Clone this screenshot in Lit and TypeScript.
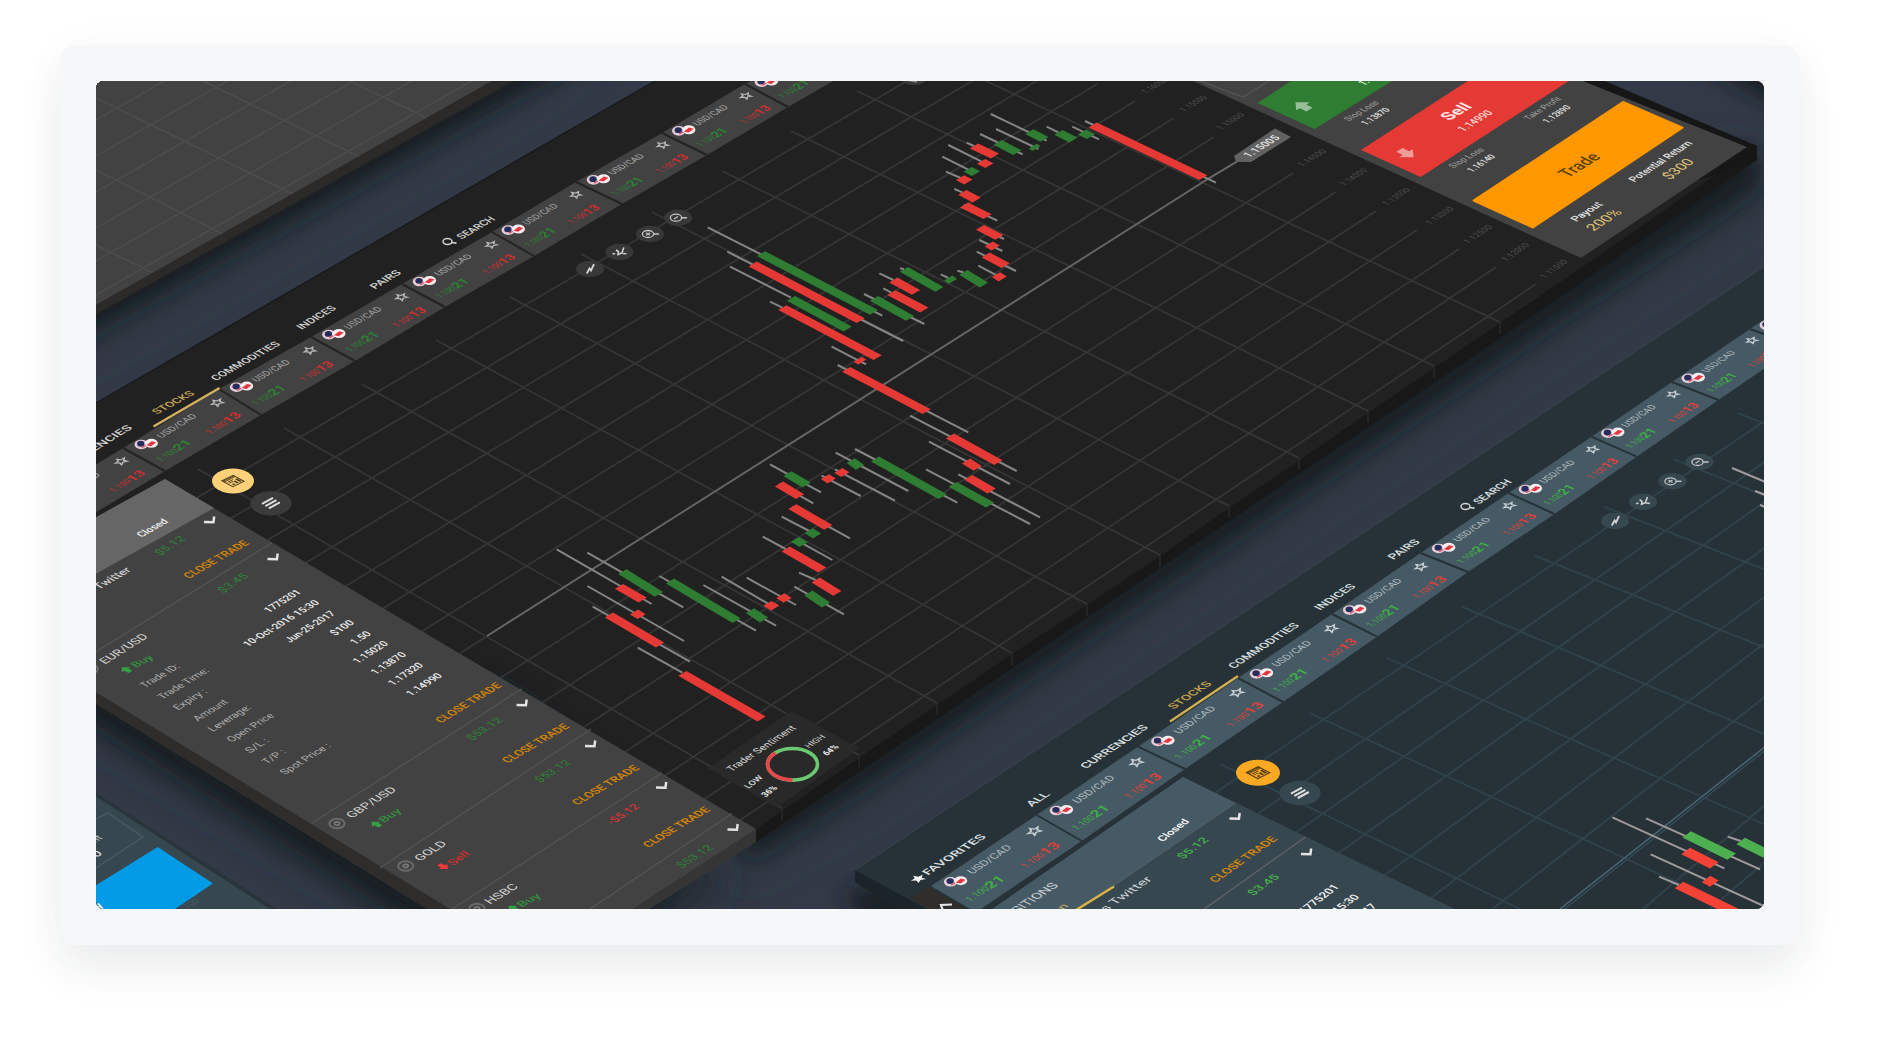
import { LitElement, html, svg, css } from "lit";
import { customElement } from "lit/decorators.js";

type Pt = [number, number];
type Theme = {
  strip: string; gap: string; name: string; up: string; down: string; star: string;
};

const pts = (list: Pt[]) => list.map((p) => p.join(",")).join(" ");

const DARK: Theme = { strip: "#424242", gap: "#232323", name: "#a8a8a8", up: "#2b8233", down: "#cf2e2e", star: "#b9b9b9" };
const TEAL: Theme = { strip: "#455a64", gap: "#263238", name: "#b3bcc0", up: "#3fae45", down: "#dc4038", star: "#c9d0d3" };

const V_LEFT: Pt = [0.86, 0.5];
const V_RIGHT: Pt = [0.9, 0.44];

/** Text whose baseline runs from (x1,y1) to (x2,y2); v is the direction the glyphs descend in. */
const label = (
  x1: number, y1: number, x2: number, y2: number, text: string,
  size: number, fill: string, weight = 400, v: Pt = V_LEFT,
) => {
  const len = Math.hypot(x2 - x1, y2 - y1);
  return svg`<text transform="matrix(${(x2 - x1) / len} ${(y2 - y1) / len} ${v[0]} ${v[1]} ${x1} ${y1})"
    font-size=${size} font-weight=${weight} fill=${fill}
    textLength=${len} lengthAdjust="spacingAndGlyphs">${text}</text>`;
};

const line = (a: Pt, b: Pt, stroke: string, width = 1.4) =>
  svg`<line x1=${a[0]} y1=${a[1]} x2=${b[0]} y2=${b[1]} stroke=${stroke} stroke-width=${width} />`;

const poly = (p: Pt[], fill: string) => svg`<polygon points=${pts(p)} fill=${fill} />`;

const flags = (x: number, y: number) => svg`
  <ellipse cx=${x - 5.5} cy=${y + 0.7} rx="6.8" ry="4.8" fill="#e6cdd5" />
  <ellipse cx=${x - 6} cy=${y} rx="3.7" ry="2.9" fill="#262c5e" />
  <path d="M${x - 5} ${y + 4}l6 -3.4M${x - 1.6} ${y + 0.6}l2.4 -1.6" stroke="#dd5568" stroke-width="1.3" />
  <ellipse cx=${x + 4.6} cy=${y - 0.4} rx="6.5" ry="4.5" fill="#f6eeee" />
  <path d="M${x - 0.4} ${y + 1.4}l5.2 -4l4.6 1.2l-5 3.8z" fill="#e5343f" />`;

const STAR = "M0 -5L1.5 -1.6L5 -1.4L2.3 1L3.2 4.6L0 2.6L-3.2 4.6L-2.3 1L-5 -1.4L-1.5 -1.6Z";

/** One quote tile, drawn in a 100 by 50 local space spanned by the strip's own edges. */
const quote = (t0: Pt, t1: Pt, b0: Pt, th: Theme) => {
  const u: Pt = [t1[0] - t0[0], t1[1] - t0[1]];
  const v: Pt = [b0[0] - t0[0], b0[1] - t0[1]];
  const m = `matrix(${u[0] / 100} ${u[1] / 100} ${v[0] / 50} ${v[1] / 50} ${t0[0]} ${t0[1]})`;
  const fx = t0[0] + u[0] * 0.161 + v[0] * 0.21;
  const fy = t0[1] + u[1] * 0.161 + v[1] * 0.21;
  return svg`
    ${flags(fx - 0.5, fy + 0.4)}
    <g transform=${m}>
      <text x="27.5" y="14.5" font-size="9.8" fill=${th.name} textLength="37.5" lengthAdjust="spacingAndGlyphs">USD/CAD</text>
      <text x="6" y="38" font-size="9.5" fill=${th.up} textLength="18.5" lengthAdjust="spacingAndGlyphs">1.100</text>
      <text x="24.5" y="38.5" font-size="12.5" font-weight="700" fill=${th.up} textLength="14.5" lengthAdjust="spacingAndGlyphs">21</text>
      <text x="55" y="41" font-size="9.5" fill=${th.down} textLength="18.5" lengthAdjust="spacingAndGlyphs">1.100</text>
      <text x="73.5" y="41.5" font-size="12.5" font-weight="700" fill=${th.down} textLength="14.5" lengthAdjust="spacingAndGlyphs">13</text>
      <path transform="translate(87 12.5) scale(0.92)" d=${STAR} fill="none" stroke=${th.star} stroke-width="1.5" />
    </g>`;
};

const strip = (top: Pt[], bottom: Pt[], th: Theme) => svg`
  ${poly([...top, ...[...bottom].reverse()], th.strip)}
  ${top.slice(0, -1).map((t, i) => quote(t, top[i + 1], bottom[i], th))}
  ${top.map((t, i) => line(t, bottom[i], th.gap, 2))}`;

type Candle = [string, number, number, number, number, number, number, number, number];

/** Candle: side, then body start, body end, wick start and wick end in thirds of a pixel from origin o. */
const candle = (c: Candle, o: Pt, colors: Record<string, string>, wick: string, w: Pt) => {
  const n = c.slice(1) as number[];
  const p: Pt[] = [0, 2, 4, 6].map((i) => [n[i] / 3 + o[0], n[i + 1] / 3 + o[1]]);
  const [a, b, s, e] = p;
  return svg`
    ${line(s, e, wick, 2)}
    ${poly([[a[0] - w[0], a[1] - w[1]], [a[0] + w[0], a[1] + w[1]], [b[0] + w[0], b[1] + w[1]], [b[0] - w[0], b[1] - w[1]]], colors[c[0]])}`;
};

const SET_A: Candle[] = [
  ["g", 843, 536, 1182, 712, 683, 457, 1207, 722],
  ["r", 818, 567, 1142, 737, 742, 530, 1270, 798],
  ["g", 933, 670, 1103, 762, 750, 575, 933, 668],
  ["r", 907, 698, 1193, 848, 870, 680, 907, 698],
  ["r", 1133, 853, 1147, 861, 1055, 815, 1158, 868],
];
const SET_B: Candle[] = [
  ["r", 78, 388, 320, 515, 53, 375, 445, 577],
  ["r", 390, 588, 535, 668, 270, 527, 590, 693],
  ["r", 438, 663, 473, 685, 327, 605, 570, 732],
  ["r", 445, 712, 515, 753, 415, 703, 660, 832],
  ["g", 398, 733, 510, 795, 318, 688, 630, 852],
  ["g", 165, 657, 368, 770, 105, 627, 412, 788],
  ["g", 92, 662, 120, 682, 47, 638, 265, 753],
  ["r", 55, 691, 76, 704, 45, 688, 225, 782],
  ["r", 15, 710, 35, 723, 5, 707, 122, 768],
  ["g", 252, 88, 358, 148, 240, 85, 252, 88],
  ["r", 220, 120, 288, 157, 178, 100, 220, 120],
  ["r", 214, 158, 313, 210, 190, 145, 214, 158],
  ["g", 162, 175, 270, 235, 132, 162, 313, 252],
  ["g", 385, 114, 399, 124, 362, 103, 385, 114],
  ["g", 430, 97, 492, 135, 412, 92, 430, 97],
  ["r", 528, 104, 548, 117, 475, 77, 530, 106],
  ["r", 497, 45, 557, 77, 470, 35, 588, 93],
  ["r", 506, 12, 527, 24, 478, 0, 547, 33],
];
const SET_C: Candle[] = [
  ["r", 240, 457, 298, 487, 240, 457, 312, 492],
  ["r", 192, 390, 263, 425, 192, 390, 292, 437],
  ["r", 187, 352, 230, 375, 163, 342, 187, 352],
  ["r", 180, 308, 205, 321, 138, 290, 182, 309],
  ["g", 203, 283, 228, 296, 127, 245, 205, 284],
  ["r", 243, 259, 268, 272, 145, 210, 245, 260],
  ["r", 222, 213, 285, 243, 200, 203, 222, 213],
  ["g", 293, 202, 352, 233, 240, 177, 368, 238],
  ["g", 388, 170, 433, 193, 272, 117, 440, 197],
  ["g", 399, 213, 409, 221, 288, 162, 415, 222],
  ["g", 475, 172, 520, 195, 440, 155, 475, 172],
  ["g", 546, 171, 573, 185, 517, 155, 597, 193],
  ["r", 578, 150, 910, 308, 555, 138, 948, 323],
];
const SET_D: Candle[] = [
  ["g", 922, 341, 980, 375, 870, 313, 1023, 397],
  ["r", 897, 372, 960, 410, 897, 372, 1000, 430],
  ["r", 937, 440, 1045, 502, 937, 440, 1110, 535],
  ["g", 986, 512, 1011, 528, 905, 470, 988, 513],
  ["g", 945, 538, 971, 554, 947, 539, 1057, 600],
  ["r", 917, 567, 1027, 630, 848, 530, 917, 567],
  ["r", 1007, 660, 1072, 700, 957, 638, 1007, 660],
  ["g", 985, 699, 1038, 735, 943, 680, 1092, 763],
  ["r", 901, 707, 923, 721, 800, 653, 948, 735],
  ["r", 862, 730, 886, 744, 725, 650, 864, 731],
  ["g", 810, 752, 852, 780, 670, 675, 888, 797],
  ["g", 570, 663, 770, 782, 538, 648, 828, 812],
  ["g", 427, 635, 537, 703, 322, 578, 610, 742],
  ["r", 417, 679, 488, 720, 230, 568, 515, 732],
  ["r", 462, 756, 485, 770, 322, 678, 612, 843],
  ["r", 387, 765, 540, 855, 338, 740, 630, 905],
  ["r", 607, 940, 845, 1077, 473, 863, 607, 938],
];
const SET_E: Candle[] = [
  ["g", 1220, 583, 1355, 650, 1098, 535, 1440, 688],
  ["r", 1217, 633, 1303, 676, 997, 532, 1333, 685],
  ["r", 1278, 717, 1303, 731, 1112, 643, 1460, 802],
  ["r", 1197, 735, 1420, 844, 1137, 710, 1197, 735],
  ["g", 1382, 603, 1500, 662, 1343, 590, 1382, 603],
];

const GRID_DOWN: [Pt, Pt][] = [
  [[198, 469], [782, 808]], [[284, 428], [859, 755]], [[361.7, 384], [937, 703]],
  [[436, 340], [1012, 653]], [[510, 297], [1087, 604]], [[581, 254], [1160, 555]],
  [[652, 212], [1229, 506]], [[722, 171], [1299, 458]], [[791, 131], [1368, 411]],
  [[857, 91], [1434, 366]], [[922, 51], [1500, 322]],
];
const GRID_UP: [Pt, Pt][] = [
  [[222, 483], [987, 34]], [[257, 503], [1023, 51]], [[293, 525], [1060, 67]],
  [[332, 547], [1097, 84]], [[372, 570], [1135, 101]], [[408, 593], [1174, 118]],
  [[448, 615], [1214, 137]], [[487, 636], [1254, 150]], [[527, 661], [1293, 173]],
  [[568, 686], [1335.7, 192]], [[610, 710], [1376, 211]], [[652, 734], [1417, 230]],
  [[693, 757], [1459, 249]], [[733, 780], [1496, 267]], [[770, 800], [1536, 284]],
];
const extend = ([a, b]: [Pt, Pt], t: number): [Pt, Pt] =>
  [[a[0] - (b[0] - a[0]) * t, a[1] - (b[1] - a[1]) * t], b];

const TOP_A: Pt[] = [[26, 507], [123, 448], [219, 389], [311, 337], [402, 284], [492, 232], [576, 182], [662, 133], [745, 84], [829, 36]];
const BOT_A: Pt[] = [[68, 529], [165, 471], [261, 415], [355, 361], [445, 307], [534, 256], [622, 204], [707, 155], [788, 107], [870, 60]];
const TOP_B: Pt[] = [[930, 886.7], [1036.7, 815], [1138, 746.7], [1238, 678], [1332, 614], [1420.6, 553], [1508.5, 493], [1591.4, 436.7], [1672, 382], [1750, 329], [1828, 276]];
const BOT_B: Pt[] = [[975, 913], [1081.7, 841], [1185, 769], [1283, 702], [1377, 636.7], [1468, 572], [1554.5, 514], [1636.7, 456.7], [1718.5, 400], [1797, 346], [1872, 294]];

const NAV_A: [number, number, number, number, string][] = [
  [66, 469, 133, 428, "CURRENCIES"], [216, 381, 281, 344.5, "COMMODITIES"],
  [301.7, 330, 337, 308.5, "INDICES"], [375, 289.5, 402, 273, "PAIRS"], [461.7, 239.5, 496, 219.5, "SEARCH"],
];
const NAV_B: [number, number, number, number, string][] = [
  [928, 875.5, 986.7, 837, "FAVORITES"], [1031.7, 807, 1050.7, 794.5, "ALL"],
  [1086, 769, 1149, 727.5, "CURRENCIES"], [1234, 669, 1300, 625.5, "COMMODITIES"],
  [1320, 610.5, 1356.5, 586.5, "INDICES"], [1393.6, 560, 1420.6, 542, "PAIRS"], [1479, 504.5, 1512.4, 482, "SEARCH"],
];

const DETAILS: [number, number, number, number, string][] = [
  [145, 688, 180.7, 667, "Trade ID:"], [162.7, 699.5, 210, 671, "Trade Time:"],
  [178, 710.5, 208, 692, "Expiry :"], [198, 721.5, 229, 702.5, "Amount"],
  [213, 732, 252, 708, "Leverage:"], [231.7, 742.5, 275, 716, "Open Price"],
  [250, 753.5, 270, 741, "S/L :"], [267, 764.5, 286.7, 752.5, "T/P :"], [285, 775, 331.7, 746.5, "Spot Price :"],
];
const VALUES: [number, number, number, number, string][] = [
  [269, 613, 302, 592.5, "1775201"], [248, 647, 320, 603, "10-Oct-2016 15:30"],
  [290, 643, 336, 614, "Jun-25-2017"], [335, 636, 355, 623, "$100"],
  [355, 645, 372, 634, "1.50"], [357.7, 664, 389, 644, "1.15020"],
  [375.7, 675, 407, 655, "1.13870"], [393, 686, 424, 665.5, "1.17320"], [411, 696.5, 443, 676, "1.14990"],
];
const CLOSES: [number, number, number, number][] = [
  [189, 579, 250, 543.5], [441, 723.5, 502.5, 686], [507.5, 763.5, 570, 727],
  [577.5, 805.5, 640, 768.5], [648.5, 848, 711, 810],
];
const PRICES: [number, number, number, number, string][] = [
  [1146, 94, 1169, 80, "1.16000"], [1184, 112, 1208, 97.7, "1.15500"], [1220.7, 130, 1245, 115, "1.15000"],
  [1302, 166.7, 1327, 151.7, "1.14500"], [1344, 186, 1368, 170.7, "1.14000"], [1387, 205.7, 1411, 190, "1.13500"],
  [1430, 225, 1454.6, 209, "1.13000"], [1468, 244, 1493, 227, "1.12500"], [1506, 261.7, 1530, 245, "1.12000"],
  [1545, 279, 1568, 261.7, "1.11500"],
];

const GRID2_DOWN: [Pt, Pt][] = [
  [[1220, 764], [1520, 909]], [[1309, 712.7], [1735, 909]], [[1387, 658], [1766, 825]],
  [[1461.6, 606.7], [1766, 735]], [[1534.6, 555.7], [1766, 648]], [[1604, 506.7], [1766, 570]],
  [[1673, 459], [1766, 496]], [[1737, 413], [1766, 424]],
];
const GRID2_UP: [Pt, Pt][] = [
  [[1215, 793], [1766, 420]], [[1230, 833], [1766, 461]], [[1250, 865], [1766, 501]],
  [[1280, 895], [1766, 547]], [[1330, 915], [1766, 596]], [[1410, 914], [1766, 642]],
  [[1490, 911], [1766, 696]], [[1643, 909], [1766, 804]], [[1710, 909], [1766, 861]],
];

const chevron = (x: number, y: number) =>
  svg`<polyline points=${pts([[x - 6, y + 1.6], [x + 3.4, y + 1.8], [x + 4.2, y - 4]])} fill="none" stroke="#e4e4e4" stroke-width="2.5" />`;

const eye = (x: number, y: number) => svg`
  <ellipse cx=${x} cy=${y} rx="7.6" ry="4.8" fill="none" stroke="#6a6a6a" stroke-width="2" />
  <ellipse cx=${x} cy=${y} rx="2.6" ry="1.6" fill="none" stroke="#777777" stroke-width="1.6" />`;

/** Thick arrow along the plane's vertical axis; dir 1 points up the plane, -1 points down it. */
const arrow = (x: number, y: number, s: number, dir: number, fill: string, opacity = 1) =>
  svg`<path transform="matrix(${0.86 * s} ${-0.5 * s} ${0.88 * s * dir} ${0.46 * s * dir} ${x} ${y})"
    d="M0 -5L5 0.4H2.3V5H-2.3V0.4H-5Z" fill=${fill} fill-opacity=${opacity} />`;

const search = (x: number, y: number, c = "#d2d2d2") => svg`
  <ellipse cx=${x - 1.5} cy=${y} rx="4.5" ry="2.9" fill="none" stroke=${c} stroke-width="1.5" />
  <line x1=${x + 2.5} y1=${y + 1} x2=${x + 7.5} y2=${y + 1.6} stroke=${c} stroke-width="1.6" />`;

const tool = (x: number, y: number, kind: number, bg: string) => svg`
  <ellipse cx=${x} cy=${y} rx="14" ry="8.2" fill=${bg} />
  ${kind === 0
    ? svg`<polyline points=${pts([[x - 3.2, y + 4.5], [x - 0.4, y - 0.6], [x + 1, y + 1.4], [x + 4, y - 4.8]])} fill="none" stroke="#d8d8d8" stroke-width="1.8" />`
    : kind === 1
      ? svg`<polyline points=${pts([[x - 3.5, y - 2], [x - 1, y - 0.4], [x - 1.5, y + 2.6], [x + 2.4, y + 1], [x + 4.4, y - 4.6]])} fill="none" stroke="#d8d8d8" stroke-width="1.5" />
          <path d="M${x - 7} ${y + 2}l2.6 -.6M${x + 3} ${y + 1.4}l4 .4" stroke="#c9c9c9" stroke-width="1.5" />`
      : svg`<ellipse cx=${x - 2} cy=${y} rx="5.6" ry="3.5" fill="none" stroke="#c4c4c4" stroke-width="1.3" />
          <line x1=${x + 3.6} y1=${y} x2=${x + 9} y2=${y} stroke="#c4c4c4" stroke-width="1.5" />
          <path d=${kind === 2 ? `M${x - 4} ${y + 1.2}l4 -2.4M${x - 4} ${y - 1.2}l4 2.4` : `M${x - 4} ${y + 1.2}l4 -2.4`} stroke="#c4c4c4" stroke-width="1.2" />`}`;

const newsButton = (x: number, y: number, fill: string, s = 1) => svg`
  <ellipse cx=${x} cy=${y} rx=${21 * s} ry=${12.4 * s} fill=${fill} />
  <g transform="matrix(${0.8 * s} ${-0.4 * s} ${0.78 * s} ${0.42 * s} ${x} ${y})" fill="none" stroke="#4c3c18">
    <rect x="-7" y="-7" width="14" height="14" stroke-width="1.4" />
    <path d="M-7 -4.2H7M-7 -5.8H7" stroke-width="1.2" />
    <path d="M-5 -1.8H2M-5 0.4H0" stroke-width="1.1" />
    <path d="M-3.4 5.5V3M0.8 5.5V0.8M4.6 5.5V-1" stroke-width="2.3" />
  </g>`;

const menuButton = (x: number, y: number, fill: string) => svg`
  <ellipse cx=${x} cy=${y} rx="20.6" ry="12.2" fill=${fill} />
  <path d=${[-1, 0, 1].map((i) => `M${x - 5.6 + i * 3.4} ${y + 2.8 + i * 2.2}l11 -6`).join("")} stroke="#dedede" stroke-width="2" />`;

@customElement("app-root")
export class AppRoot extends LitElement {
  static styles = css`
    :host {
      display: block;
      width: 100%;
      height: 1050px;
      background: #ffffff;
      overflow: hidden;
      font-family: Roboto, "Liberation Sans", sans-serif;
    }
    .page {
      display: flex;
      box-sizing: border-box;
      height: 1050px;
      padding: 45px 91px 105px 60px;
    }
    .frame {
      flex: 1;
      display: flex;
      box-sizing: border-box;
      padding: 36px;
      border-radius: 16px;
      background: #f5f7f9;
      box-shadow: 0 26px 44px rgba(35, 40, 60, 0.07), 0 4px 50px rgba(35, 40, 60, 0.03);
    }
    .scene {
      flex: 1;
      display: block;
      min-width: 0;
      border-radius: 8px;
      overflow: hidden;
      background: #333a47;
    }
    text { font-family: Roboto, "Liberation Sans", sans-serif; }
  `;

  private backPanel() {
    const up: number[] = [120, 156, 192, 228, 261, 295];
    const down: [Pt, Pt][] = [
      [[96, 98], [293, 194]], [[96, 170], [223, 234]], [[96, 245], [153, 273]],
      [[203, 81], [360, 157]], [[337, 75], [427, 118]],
    ];
    return svg`
      <polygon points="60,372 96,352 530,100 600,50 60,50" fill="#2a353d" filter="url(#wide)" />
      <polygon points="60,348 96,328 520,92 600,50 60,50" fill="#171d21" filter="url(#soft)" />
      ${poly([[90, 318], [96, 314], [513, 81], [60, 60]], "#2c2a29")}
      ${poly([[90, 308.5], [96, 305], [492, 81], [60, 60]], "#424242")}
      ${up.map((y) => line([96, y], [96 + (y - 60) / 0.57, 60], "#4c4c4c", 1.7))}
      ${down.map(([a, b]) => line(a, b, "#4c4c4c", 1.7))}
      ${poly([[96, 305], [96, 314], [513, 81], [492, 81]], "#2c2a29")}`;
  }

  private cornerPanel() {
    return svg`
      ${poly([[90, 789], [96, 792.5], [277, 909], [90, 915]], "#2a353b")}
      ${poly([[90, 793], [96, 796.5], [270, 909], [90, 915]], "#37474f")}
      <polygon points="90,822 108,813 143,837 90,872" fill="none" stroke="#465b66" stroke-width="1.3" />
      ${label(72, 858, 103, 838, "Amount", 10, "#c5cacd")}
      ${label(84, 866, 103, 853.5, "100", 11, "#d8dcde", 500)}
      ${poly([[90, 889], [157.7, 847], [213, 883.5], [172, 911], [90, 915]], "#039be5")}
      ${label(88, 916, 104, 906, "Buy", 12, "#ffffff", 500)}
      ${label(187, 909, 200, 901, "100", 9, "#465b66")}`;
  }

  private chart() {
    const col = { g: "#2e7d32", r: "#e53935" };
    const w: Pt = [4.1, -2.4];
    const edge: Pt[] = [[756, 829], [782, 811], [859, 758], [937, 705], [1012, 654], [1087, 605], [1160, 556], [1229, 508], [1300, 460], [1368, 413], [1434, 368], [1500, 323], [1581, 268], [1757, 146]];
    return svg`
      <polygon points="740,880 860,812 1300,516 1600,315 1770,205 1755,150 1600,180 700,700" fill="#2a353d" filter="url(#wide)" />
      <polygon points="750,858 860,788 1300,492 1600,290 1762,182 1752,150 1600,170 700,700" fill="#161c20" filter="url(#soft)" />
      <polygon points="1700,60 1764,98 1800,110 1800,40 1700,40" fill="#161c20" filter="url(#soft)" />
      ${poly([[620, 600], ...edge, [1757, 160], [1590, 276], [1500, 338], [1229, 521], [859, 772], [756, 842]], "#181818")}
      ${poly([[90, 406.5], [96, 403], [655, 81], [700, 55], [1550, 62], [1757, 146], ...[...edge].reverse(), [90, 560]], "#212121")}
      ${line([96, 403], [655, 81], "#17191b", 1.4)}
      ${GRID_DOWN.map(([a, b]) => svg`${line(a, b, "#363636", 1.7)}${line(b, [b[0], b[1] + 12], "#282828", 1.5)}`)}
      ${GRID_UP.map((g) => { const [a, b] = extend(g, 0.06); return line(a, b, "#363636", 1.7); })}
      ${line([487, 636], [1207, 179.5], "#666666", 1.8)}
      ${line([1207, 179.5], [1238, 161], "#6c6c6c", 1.8)}
      ${SET_A.map((c) => candle(c, [480, 75], col, "#868686", w))}
      ${SET_B.map((c) => candle(c, [820, 240], col, "#868686", w))}
      ${SET_C.map((c) => candle(c, [900, 75], col, "#868686", w))}
      ${SET_D.map((c) => candle(c, [480, 360], col, "#868686", w))}
      ${PRICES.map(([a, b, c, d, s]) => label(a, b, c, d, s, 9, "#4e4e4e", 400, V_RIGHT))}
      ${poly([[1234, 156], [1275, 128.5], [1291, 137], [1251, 162], [1236, 162]], "#616161")}
      ${label(1249, 158, 1280.5, 138, "1.15005", 11, "#e6e6e6", 500, V_RIGHT)}
      <ellipse cx="914" cy="78" rx="13" ry="7" fill="#3b3b3b" />
      <path d="M907 80l10 2" stroke="#8d8d8d" stroke-width="1.4" />
      ${strip(TOP_A, BOT_A, DARK)}
      ${NAV_A.map(([a, b, c, d, s]) => label(a, b, c, d, s, 10.5, "#d4d4d4", 500))}
      ${search(449, 241.5)}
      ${label(157, 414.5, 195.5, 394, "STOCKS", 10.5, "#c9a65a", 500)}
      ${line([153.5, 426.5], [219.5, 388], "#d6b15f", 2.4)}
      ${newsButton(233, 481, "#fdd17a")}
      ${menuButton(271, 503.3, "#3b3b3b")}
      ${tool(590, 269, 0, "#383838")}${tool(619.5, 252, 1, "#383838")}
      ${tool(650, 234, 2, "#383838")}${tool(678, 217.7, 3, "#383838")}`;
  }

  private sentiment() {
    return svg`
      <polygon points="791.7,710.7 859,748.3 776.7,807.7 708,768.3" fill="#2a2a2a" fill-opacity="0.93" />
      ${label(731.7, 772, 796.7, 728.5, "Trader Sentiment", 10.5, "#d6d6d6")}
      <ellipse cx="792.5" cy="764.3" rx="25" ry="15.8" fill="none" stroke="#6cc871" stroke-width="3.6" />
      <path d="M775.5 752.8A25 15.8 0 0 0 792.5 780.1" fill="none" stroke="#e5484b" stroke-width="3.8" />
      ${label(748.5, 789, 763.5, 777.5, "LOW", 8.5, "#dddddd", 500)}
      ${label(765.7, 797.5, 778, 788, "36%", 9, "#eeeeee", 700)}
      ${label(809, 748.5, 826, 737, "HIGH", 8.5, "#dddddd")}
      ${label(827, 756, 839.5, 747, "64%", 9, "#eeeeee", 700)}`;
  }

  private positions() {
    const up = "#2b8233";
    const dividers: [Pt, Pt][] = [
      [[90, 655.5], [272, 542.7]], [[312, 823], [521.7, 689]], [[380, 868], [591, 729]],
      [[452, 909], [662, 773]], [[590, 909], [732, 813.5]],
    ];
    return svg`
      <polygon points="60,712 96,734 420,935 660,930 730,880 500,700 60,600" fill="#222b32" filter="url(#wide)" />
      <polygon points="60,698 96,720 430,930 620,930 670,895 500,700 60,600" fill="#161c20" filter="url(#soft)" />
      ${poly([[90, 689], [96, 704], [436, 915], [450, 915], [450, 905], [96, 690]], "#2f2d2c")}
      ${poly([[756, 829], [756, 842], [640, 915], [610, 915]], "#353535")}
      ${poly([[90, 520.5], [165, 479], [756, 829], [628, 912], [455, 912], [90, 688.5]], "#424242")}
      ${poly([[90, 520.5], [165, 479], [214, 508], [90, 577]], "#666666")}
      ${dividers.map(([a, b]) => line(a, b, "#545454", 1.3))}
      ${label(141.7, 537.5, 169, 522, "Closed", 10.5, "#f0f0f0", 500)}
      ${label(86, 597.5, 132, 570.5, "vs Twitter", 11.5, "#cfcfcf", 500)}
      ${label(160, 556, 186, 539, "$5.12", 11, up)}
      ${label(223, 593.5, 249, 576.5, "$3.45", 11, up)}
      ${CLOSES.map(([a, b, c, d]) => label(a, b, c, d, "CLOSE TRADE", 11.5, "#d98706", 500))}
      ${label(105, 664.5, 149, 637, "EUR/USD", 11.5, "#d2d2d2")}
      <ellipse cx="90" cy="669" rx="7.8" ry="5" fill="none" stroke="#6f6f6f" stroke-width="1.8" />
      ${arrow(126, 669.5, 1, 1, "#36a043")}
      ${label(136, 668, 154.5, 658, "Buy", 11, "#338e3d", 500)}
      ${DETAILS.map(([a, b, c, d, s]) => label(a, b, c, d, s, 10.5, "#aeaeae"))}
      ${VALUES.map(([a, b, c, d, s]) => label(a, b, c, d, s, 10.5, "#ededed", 500))}
      ${label(471.7, 741, 503.5, 720.5, "$53.12", 11, up)}
      ${label(540, 783, 571.7, 763, "$53.12", 11, up)}
      ${label(612, 825, 640, 807, "-$5.12", 11, "#d63232", 500)}
      ${label(681.7, 868.5, 714, 848, "$53.12", 11, up)}
      ${eye(337, 823.5)}${label(351.7, 818.5, 397.2, 790, "GBP/USD", 11.5, "#d2d2d2")}
      ${arrow(376, 824, 1, 1, "#36a043")}${label(384, 823, 402.5, 811.5, "Buy", 11, "#338e3d", 500)}
      ${eye(405.7, 866)}${label(420, 861.5, 447.7, 844, "GOLD", 11.5, "#d2d2d2")}
      ${arrow(443.5, 866.7, 1, -1, "#ef3a38")}${label(453, 866, 470.5, 854, "Sell", 11, "#c62f2f", 500)}
      ${eye(477, 908.5)}${label(490, 904.5, 519, 887, "HSBC", 11.5, "#d2d2d2")}
      ${arrow(513, 908, 1, 1, "#36a043")}${label(522, 907.5, 542, 896.5, "Buy", 11, "#338e3d", 500)}
      ${([[210, 520.5], [273.5, 557.5], [522.5, 703.5], [591, 744.5], [662, 786], [733.5, 828]] as Pt[]).map(([x, y]) => chevron(x, y))}`;
  }

  private order() {
    const v = V_RIGHT;
    return svg`
      ${poly([[1570, 66], [1598, 78], [1757, 146], [1757, 160], [1700, 180], [1560, 70]], "#161616")}
      ${poly([[1193, 81], [1150, 60], [1540, 60], [1583, 81], [1747, 147], [1581, 258]], "#424242")}
      <polyline points="1200,81 1243,97 1272,79" fill="none" stroke="#555555" stroke-width="1.2" />
      ${poly([[1257.5, 103], [1300, 75], [1402, 75], [1314.6, 129]], "#2e7d32")}
      ${poly([[1361, 150], [1477, 75], [1578, 75], [1420.7, 177]], "#e53935")}
      <polygon points="1473.5,200.7 1623,102 1682.5,127.7 1533,227.5" fill="#ff9800" stroke="#ff9800" stroke-width="2" stroke-linejoin="round" />
      ${arrow(1302.5, 106, 1.6, 1, "#ffffff", 0.5)}
      ${arrow(1406.5, 153.5, 1.6, -1, "#ffffff", 0.5)}
      ${label(1364, 86, 1392, 68, "1.13870", 11, "#e8f0e8", 500, v)}
      ${label(1349, 121.5, 1379.6, 103, "Stop Loss", 9.5, "#a2a2a2", 400, v)}
      ${label(1366, 125.5, 1390.5, 110, "1.13870", 9.5, "#e2e2e2", 500, v)}
      ${label(1449, 121, 1473, 107, "Sell", 16.5, "#ffe3e2", 700, v)}
      ${label(1463.6, 132, 1493.5, 113, "1.14990", 11.5, "#ffd9d8", 500, v)}
      ${label(1529, 120.5, 1562, 99, "Take Profit", 9.5, "#a2a2a2", 400, v)}
      ${label(1547.5, 123.5, 1571.5, 107.5, "1.12890", 9.5, "#e2e2e2", 500, v)}
      ${label(1453.6, 168.5, 1485, 150, "Stop Loss", 9.5, "#a2a2a2", 400, v)}
      ${label(1472, 172.5, 1496, 156.7, "1.16140", 9.5, "#e2e2e2", 500, v)}
      ${label(1568, 178, 1601.5, 157.5, "Trade", 18, "#5a430f", 500, v)}
      ${label(1634.5, 182.5, 1693, 143.5, "Potential Return", 11, "#e4e4e4", 500, v)}
      ${label(1669.5, 180, 1695, 162, "$300", 14, "#e3c576", 400, v)}
      ${label(1576.5, 222, 1603.5, 204.5, "Payout", 11, "#e4e4e4", 500, v)}
      ${label(1593.5, 231.5, 1623, 212.5, "200%", 14, "#e3c576", 400, v)}`;
  }

  private tealPanel() {
    const v = V_RIGHT;
    const col = { g: "#4caf50", r: "#f44336" };
    const up = "#43b049";
    return svg`
      <polygon points="850,888 846,896 870,925 930,925 930,890" fill="#161c20" filter="url(#soft)" />
      ${poly([[855, 870], [855, 882], [906, 915], [940, 915]], "#1b2429")}
      ${poly([[855, 870], [1203, 640], [1608, 370], [1768, 264], [1768, 915], [932, 912]], "#263238")}
      <polyline points="855,870 1203,640 1608,370 1768,264" fill="none" stroke="#36434b" stroke-width="1" />
      ${GRID2_DOWN.map(([a, b]) => line(a, b, "#30424b", 1.8))}
      ${GRID2_UP.map(([a, b]) => line(a, b, "#30424b", 1.8))}
      ${line([1560, 909], [1766, 746], "#4a6775", 1.5)}
      ${line([1562, 911], [1768, 748], "#35505c", 1.2)}
      ${SET_E.map((c) => candle(c, [1280, 640], col, "#a09a9b", [4.3, -3.2]))}
      ${line([1732, 468], [1768, 483], "#a09a9b", 2.2)}
      ${line([1755, 491], [1768, 496], "#a09a9b", 2.2)}
      ${line([1760, 505], [1768, 508], "#a09a9b", 2.2)}
      ${poly([[910, 898], [930, 886.7], [972, 911], [932, 912]], "#302d2b")}
      <polyline points="952,904.5 941,905 943,911" fill="none" stroke="#e8e8e8" stroke-width="2.2" />
      ${strip(TOP_B, BOT_B, TEAL)}
      ${poly([[1183, 777], [1456, 909.5], [1205, 915], [1080, 915], [985, 914]], "#37474f")}
      ${poly([[1183, 777], [1235.5, 803], [1072, 914], [985, 914]], "#465a65")}
      ${line([1235.5, 803], [1075, 912], "#55616a", 1)}
      ${line([1305.5, 837], [1200, 912], "#626466", 1.3)}
      ${label(1003, 923, 1059, 885.5, "POSITIONS", 12, "#cdd3d6", 400, v)}
      ${label(1044, 923, 1069, 906, "Open", 10, "#d6b15f", 400, v)}
      ${line([1068, 915], [1114, 886.5], "#d9b343", 2.4)}
      ${label(1162.7, 842, 1190, 821.5, "Closed", 10.5, "#ffffff", 500, v)}
      ${label(1100, 916, 1153, 879.5, "vs Twitter", 12, "#cdd3d6", 400, v)}
      ${label(1182.7, 859.5, 1209.5, 840, "$5.12", 11, up, 500, v)}
      ${label(1253, 896, 1280.5, 877, "$3.45", 11, up, 500, v)}
      ${label(1215.5, 883, 1278, 839, "CLOSE TRADE", 11.5, "#d98706", 500, v)}
      ${label(1304, 914, 1340, 887, "1775201", 11, "#f4f4f4", 500, v)}
      ${label(1285, 951, 1360, 897, "10-Oct-2016 15:30", 11, "#f4f4f4", 500, v)}
      ${label(1330, 940, 1377.5, 906.5, "Jun-25-2017", 11, "#f4f4f4", 500, v)}
      ${chevron(1235.5, 817)}${chevron(1307, 852.5)}
      <path transform="matrix(1.2 -0.6 0.95 0.55 918 878.5)" d=${STAR} fill="#f2f2f2" />
      ${NAV_B.map(([a, b, c, d, s]) => label(a, b, c, d, s, 11, "#dde0e1", 500, v))}
      ${search(1467, 506.5)}
      ${label(1173.5, 709.5, 1212.5, 684, "STOCKS", 11, "#c9a24a", 500, v)}
      ${line([1170, 721.5], [1238, 676], "#d6b04c", 2.2)}
      ${newsButton(1258, 772.7, "#fba822", 1.05)}
      ${menuButton(1300, 793, "#37474f")}
      ${tool(1615, 521, 0, "#37474f")}${tool(1643, 501.7, 1, "#37474f")}
      ${tool(1672.5, 481.3, 2, "#37474f")}${tool(1699.5, 462, 3, "#37474f")}`;
  }

  render() {
    return html`
      <div class="page">
        <div class="frame">
          <svg class="scene" viewBox="96 81 1668 828" preserveAspectRatio="none" role="img">
            <defs>
              <filter id="soft" filterUnits="userSpaceOnUse" x="0" y="0" width="1891" height="1050">
                <feGaussianBlur stdDeviation="11" />
              </filter>
              <filter id="wide" filterUnits="userSpaceOnUse" x="0" y="0" width="1891" height="1050">
                <feGaussianBlur stdDeviation="20" />
              </filter>
            </defs>
            <rect x="96" y="81" width="1668" height="828" fill="#333a47" />
            ${this.backPanel()}
            ${this.chart()}
            ${this.positions()}
            ${this.sentiment()}
            ${this.order()}
            ${this.tealPanel()}
            ${this.cornerPanel()}
          </svg>
        </div>
      </div>`;
  }
}
